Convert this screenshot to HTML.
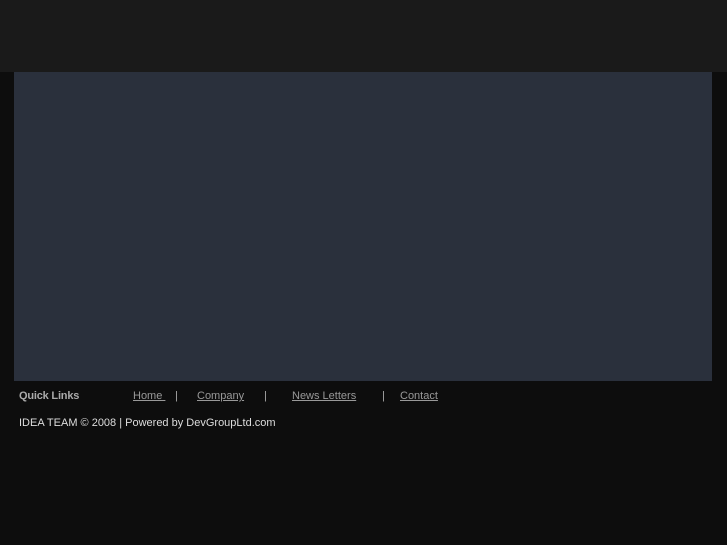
<!DOCTYPE html>
<html><head><style>
body{margin:0;width:727px;height:545px;background:#0d0d0d;font-family:"Liberation Sans",sans-serif;position:relative;overflow:hidden}
.top{position:absolute;left:0;top:0;width:727px;height:72px;background:#1a1a1a}
.panel{position:absolute;left:14px;top:72px;width:698px;height:309px;background:#2a303c}
.t{position:absolute;font-size:11px;color:#aaa;top:390px}
.l{text-decoration:underline;color:#999}
.c{position:absolute;left:19px;top:417px;font-size:11px;color:#ddd}
</style></head><body>
<div class="top"></div><div class="panel"></div>
<div class="t" style="left:19px;font-weight:bold;color:#aaa;letter-spacing:-0.2px">Quick Links</div>
<div class="t l" style="left:133px">Home&nbsp;</div>
<div class="t" style="left:175px">|</div>
<div class="t l" style="left:197px">Company</div>
<div class="t" style="left:264px">|</div>
<div class="t l" style="left:292px">News Letters</div>
<div class="t" style="left:382px">|</div>
<div class="t l" style="left:400px">Contact</div>
<div class="c">IDEA TEAM © 2008 | Powered by DevGroupLtd.com</div>
</body></html>
